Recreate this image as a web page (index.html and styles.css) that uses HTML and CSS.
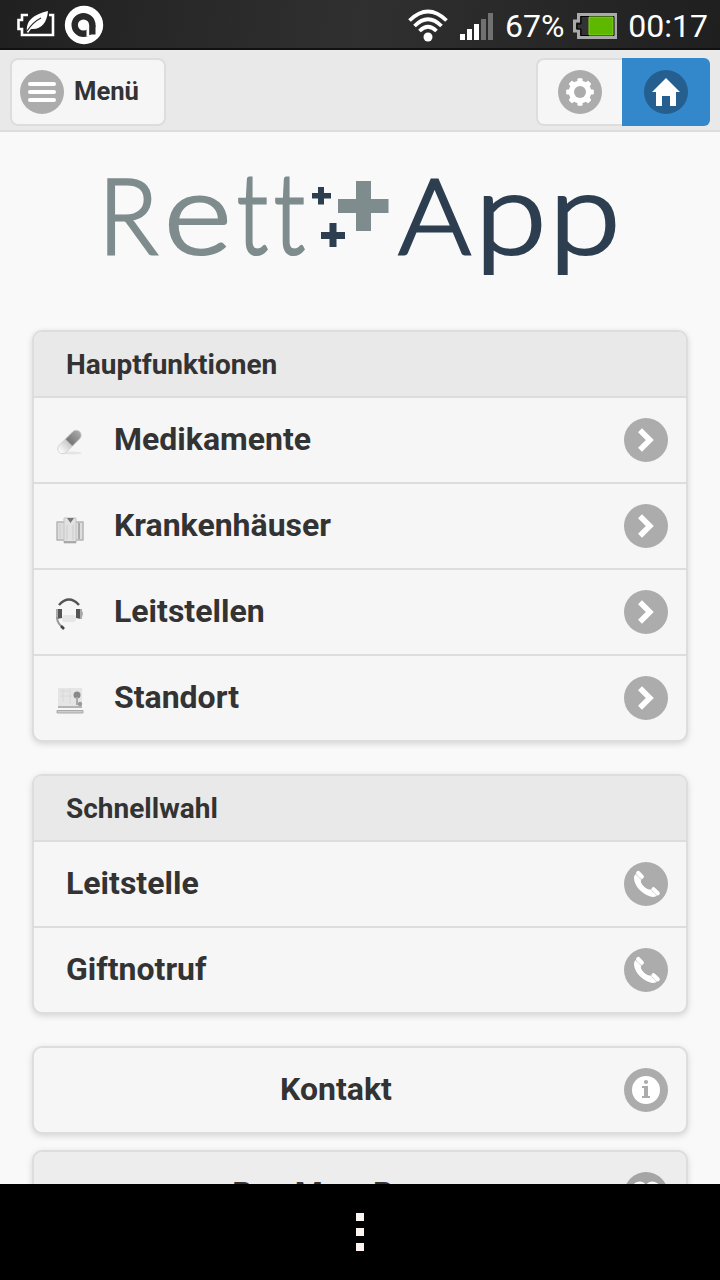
FILE: index.html
```html
<!DOCTYPE html>
<html lang="de">
<head>
<meta charset="utf-8">
<title>Rett App</title>
<link rel="stylesheet" href="styles.css">
</head>
<body>
<svg class="defs" width="0" height="0">
  <defs>
    <symbol id="chevron" viewBox="0 0 44 44"><path d="M16 12.2 25.8 22 16 31.8" fill="none" stroke="#fff" stroke-width="5.6"/></symbol>
    <symbol id="phone" viewBox="0 0 44 44"><path d="M10.200 14 12 11.800 17.500 17.200C16.500 19 16.500 20 18.800 23.200S25 28 26.700 27.200L33 33.600C31 35.600 26 35.500 20 31.500S9 20.500 10.200 14Z" fill="#fff"/><path d="M14.200 11 17.800 14.800M29.500 27.200 33.700 31.200" stroke="#fff" stroke-width="4.200" stroke-linecap="round"/><path d="M12 12.500 17.700 18M26.700 27.600 32.500 33.500" stroke="#acacac" stroke-width=".8" stroke-dasharray="1 1"/></symbol>
  </defs>
</svg>
<div class="screen">
  <header class="status">
    <div class="status-side">
      <svg class="leaf" width="38" height="28" viewBox="0 0 38 28"><path d="M11 4H5V9H1.500V18H5V24H36V4H32" fill="none" stroke="#fff" stroke-width="2.600"/><path d="M10 21C9 10 15 4 31 0C30 12 24 19 14 18L11 22Z" fill="#fff"/><path d="M10 20Q16 11 24 7" fill="none" stroke="#292929" stroke-width="1.200"/></svg>
      <svg width="40" height="40" viewBox="0 0 40 40"><circle cx="20" cy="20" r="19.200" fill="#fff"/><circle cx="19.500" cy="20" r="8.800" fill="none" stroke="#292929" stroke-width="6.400"/><path d="M25.200 20H31.500V29.500H25.200Z" fill="#292929"/><path d="M20 20H25.200V29.500L26.500 31.500H22.500V24Z" fill="#fff"/></svg>
    </div>
    <div class="status-side right">
      <svg class="wifi" width="42" height="34" viewBox="0 0 42 34"><circle cx="21" cy="28" r="4.500" fill="#fff"/><g fill="none" stroke="#fff" stroke-width="3.800"><path d="M2.500 11.500Q21-6.500 39.500 11.500"/><path d="M7.500 17Q21 3.500 34.500 17"/><path d="M12.500 22Q21 13.500 29.500 22"/></g></svg>
      <svg class="signal" width="34" height="28" viewBox="0 0 34 28"><path d="M0 21h5v6H0zM7 16h5v11H7zM14 11h5v16h-5z" fill="#fff"/><path d="M21 6h5v21h-5zM28 0h5v27h-5z" fill="#717171"/></svg>
      <span class="percent">67%</span>
      <svg class="battery" width="44" height="27" viewBox="0 0 44 27"><path d="M5.500 1.500H42.500V24.500H5.500V18H1.500V8H5.500Z" fill="#292929" stroke="#aaa" stroke-width="3"/><path d="M8 3.500H41V22.500H8V16H4V11H8Z" fill="#333" stroke="#000"/><path d="M16 4h24v18H16z" fill="#5fb800" stroke="#82d51f"/></svg>
      <span>00:17</span>
    </div>
  </header>
  <nav class="toolbar">
    <a class="menu-btn"><span class="disc"><svg width="44" height="44"><path d="M10 14H34M10 22H34M10 30H34" stroke="#fff" stroke-width="4" stroke-linecap="round"/></svg></span><span class="menu-label">Menü</span></a>
    <div class="group">
      <a class="settings"><span class="disc"><svg width="44" height="44" viewBox="0 0 44 44"><g fill="#fff"><circle cx="22" cy="22" r="11.200"/><g id="teeth"><rect x="19.400" y="8.200" width="5.200" height="27.600" rx="1.200"/><rect x="8.200" y="19.400" width="27.600" height="5.200" rx="1.200"/></g><use href="#teeth" transform="rotate(45 22 22)"/></g><circle cx="22" cy="22" r="6" fill="#acacac"/></svg></span></a>
      <a class="home"><span class="disc"><svg width="44" height="44"><path d="M22 8 36 22H32V36H26V26H18V36H12V22H8Z" fill="#fff"/></svg></span></a>
    </div>
  </nav>
  <main class="content">
    <svg class="logo" width="520" height="110" viewBox="100 170 520 110">
      <g class="logo-text">
        <g fill="#7f8c8d" stroke="#7f8c8d">
          <text transform="translate(98.500 253.500) scale(.91 .980)">R</text>
          <text transform="translate(164 254) scale(1.210 1.060)">e</text>
          <text transform="translate(237 254) scale(.84 1.060)">t</text>
          <text transform="translate(274 254) scale(.84 1.060)">t</text>
        </g>
        <g fill="#2c3e50" stroke="#2c3e50">
          <text transform="translate(398.500 253.500) scale(1.030 .980)">A</text>
          <text transform="translate(475 254) scale(1.210 1.050)">p</text>
          <text transform="translate(549 254) scale(1.210 1.050)">p</text>
        </g>
      </g>
      <path d="M356 181h15v18h17.500v14H371v18h-15v-18h-18v-14h18z" fill="#7f8c8d"/>
      <path d="M318 187h6v6h7v5.500h-7v6h-6v-6h-6V193h6zM329.500 223h7v9h8.500v7h-8.500v8h-7v-8H321v-7h8.500z" fill="#2c3e50"/>
    </svg>
    <section class="card">
      <h2>Hauptfunktionen</h2>
      <a class="row"><span class="pic"><svg width="32" height="32"><defs><linearGradient id="pill" x1="0" x2="1"><stop offset="0" stop-color="#fff"/><stop offset=".45" stop-color="#ccc"/><stop offset=".5" stop-color="#777"/><stop offset="1" stop-color="#aaa"/></linearGradient></defs><ellipse cx="18" cy="27" rx="10" ry="1.500" fill="#e5e5e5"/><rect x="1" y="11" width="29" height="10" rx="5" fill="url(#pill)" stroke="#ccc" stroke-width=".8" transform="rotate(-45 15.500 16)"/></svg></span>Medikamente<span class="disc end"><svg width="44" height="44"><use href="#chevron"/></svg></span></a>
      <a class="row"><span class="pic"><svg width="32" height="32"><path d="M3 10H11V28H3ZM21 10H29V28H21Z" fill="#ddd" stroke="#b4b4b4" stroke-width="1.500" stroke-linejoin="round"/><path d="M10 6H22V31H10Z" fill="#e2e2e2" stroke="#c4c4c4"/><path d="M13 6H20L16.500 11Z" fill="#777"/><path d="M6 12V26M13 13V28M19 13V28" stroke="#ccc"/><path d="M25 11V27" stroke="#999" stroke-width="1.500"/><path d="M10 30H22" stroke="#999" stroke-width="1.500"/></svg></span>Krankenhäuser<span class="disc end"><svg width="44" height="44"><use href="#chevron"/></svg></span></a>
      <a class="row"><span class="pic"><svg width="32" height="34"><path d="M5 8Q15-3 25 8" fill="none" stroke="#555" stroke-width="2.500"/><rect x="8" y="18" width="14" height="7" rx="3" fill="#e6e6e6"/><path d="M3 12Q1 17 3 22L8 21V12ZM27 12Q30 17 27 22L22 21V12Z" fill="#555"/><path d="M3 12V22M27 12V22" stroke="#aaa" stroke-width="2"/><path d="M3 20Q3 27 10 31" fill="none" stroke="#999" stroke-width="2"/><path d="M7 29 10 32" stroke="#444" stroke-width="2.500"/></svg></span>Leitstellen<span class="disc end"><svg width="44" height="44"><use href="#chevron"/></svg></span></a>
      <a class="row"><span class="pic"><svg width="32" height="32"><path d="M4 4H28V23H4Z" fill="#e5e5e5"/><path d="M6 7H15M6 12H18M9 5V18M16 5V20" stroke="#d8d8d8"/><circle cx="23" cy="11" r="3.500" fill="#888"/><path d="M23 13V21" stroke="#aaa" stroke-width="2"/><circle cx="26" cy="20" r="2.200" fill="#999"/><path d="M4 23H28" stroke="#b4b4b4" stroke-width="2"/><path d="M3 26.500H29V29H3Z" fill="#ccc" stroke="#aaa" stroke-linejoin="round"/></svg></span>Standort<span class="disc end"><svg width="44" height="44"><use href="#chevron"/></svg></span></a>
    </section>
    <section class="card">
      <h2>Schnellwahl</h2>
      <a class="row plain">Leitstelle<span class="disc end"><svg width="44" height="44"><use href="#phone"/></svg></span></a>
      <a class="row plain">Giftnotruf<span class="disc end"><svg width="44" height="44"><use href="#phone"/></svg></span></a>
    </section>
    <a class="card button"><span class="label">Kontakt</span><span class="disc"><svg width="44" height="44"><circle cx="22" cy="22" r="14" fill="#fff"/><circle cx="22" cy="14" r="2.100" fill="#acacac"/><path d="M18 18H24V28H26V30H18V28H20V20H18Z" fill="#acacac"/></svg></span></a>
    <a class="card button pressed"><span class="label">Buy Me a Beer</span><span class="disc"><svg width="44" height="44"><path d="M22 35 10 22C5 15 10 9.500 16 9.500Q20 9.500 22 13Q24 9.500 28 9.500C34 9.500 39 15 34 22Z" fill="#fff"/></svg></span></a>
  </main>
  <footer class="navbar"><i></i><i></i><i></i></footer>
</div>
</body>
</html>
```
FILE: styles.css
```css
* { box-sizing: border-box; }
body { margin: 0; font-family: Roboto, "Noto Sans", sans-serif; color: #333; }
.defs { position: absolute; }
svg { display: block; }
.screen { width: 720px; height: 1280px; display: flex; flex-direction: column; overflow: hidden; background: #f9f9f9; }

.status { flex: none; height: 50px; display: flex; justify-content: space-between; padding: 0 12px 0 17px; color: #fff; font-size: 32px; line-height: 52px; background: linear-gradient(100deg, #202020, #303030 50%, #1f1f1f); border-bottom: 2px solid #111; }
.status-side { display: flex; align-items: flex-start; }
.status-side > svg { flex: none; margin-top: 5px; }
.status-side .leaf { margin: 11px 9px 0 0; }
.status-side .wifi { margin: 9px 11px 0 0; }
.status-side .signal { margin: 13px 11px 0 0; }
.status-side .battery { margin: 13px 11px 0 9px; }

.toolbar { flex: none; height: 82px; display: flex; justify-content: space-between; padding: 8px 10px 0; background: #e9e9e9; border-bottom: 2px solid #ddd; }
.menu-btn { width: 156px; height: 68px; display: flex; align-items: center; gap: 10px; padding: 0 8px; border: 2px solid #ddd; border-radius: 8px; background: #f6f6f6; font-size: 25.6px; font-weight: 700; }
.menu-label { margin-bottom: 2px; }
.group { display: flex; height: 68px; }
.settings { width: 86px; padding: 10px 0 0 20px; background: #f6f6f6; border: 2px solid #ddd; border-right: 0; border-radius: 8px 0 0 8px; }
.home { width: 88px; padding: 12px 22px; background: #38c; border-radius: 0 6px 6px 0; }
.home .disc { background: #245f8f; }
.disc { flex: none; display: block; width: 44px; height: 44px; border-radius: 50%; background: #acacac; overflow: hidden; }
.end { margin-left: auto; }

.content { flex: 1; min-height: 0; overflow: hidden; padding: 38px 32px 0; }
.logo { margin: 0 0 50px 68px; overflow: visible; }
.logo-text { font-family: Lato, sans-serif; font-weight: 300; font-size: 107px; stroke-width: 3px; }
.card { display: block; margin-bottom: 32px; border: 2px solid #ddd; border-radius: 10px; background: #f6f6f6; box-shadow: 0 2px 6px rgba(0, 0, 0, .15); overflow: hidden; }
.card h2 { margin: 0; height: 64px; padding-left: 32px; background: #e9e9e9; font-size: 28px; line-height: 66px; font-weight: 700; }
.row { display: flex; align-items: center; height: 86px; padding: 0 18px 2px 20px; border-top: 2px solid #ddd; font-size: 32px; line-height: 84px; font-weight: 700; }
.row .disc { margin-top: 2px; }
.row .end { margin-left: auto; }
.pic { width: 60px; flex: none; padding-top: 6px; }
.plain { padding-left: 32px; }
.button { height: 88px; display: flex; align-items: center; padding-right: 18px; margin-bottom: 16px; font-size: 32px; font-weight: 700; }
.label { flex: 1; padding: 0 0 2px 14px; text-align: center; }
.pressed { background: #ededed; }
.pressed .label { padding-bottom: 2px; }
.pressed .disc { background: #a5a5a5; }

.navbar { flex: none; height: 96px; display: flex; flex-direction: column; align-items: center; gap: 7px; padding-top: 29px; background: #000; }
.navbar i { width: 8px; height: 8px; background: #fcf5f1; }
```
